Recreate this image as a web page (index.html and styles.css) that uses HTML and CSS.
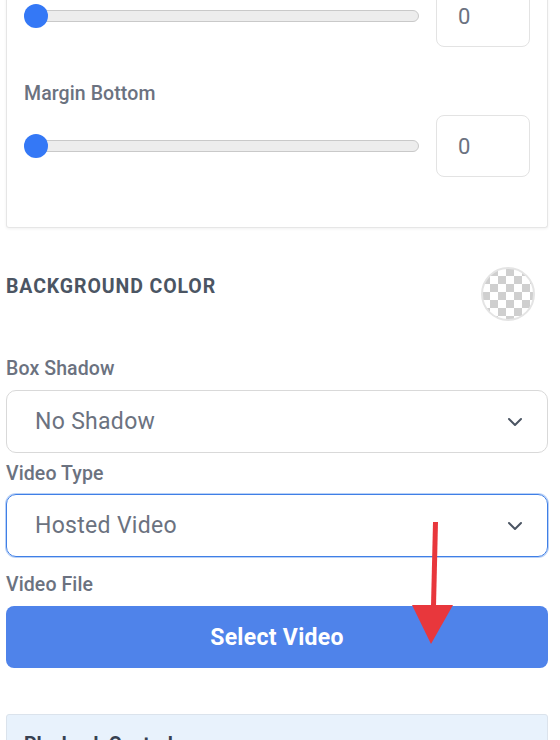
FILE: index.html
```html
<!DOCTYPE html>
<html>
<head>
<meta charset="utf-8">
<link rel="stylesheet" href="styles.css">
</head>
<body>
<div class="page">
  <div class="card">
    <div class="slider-row">
      <div class="slider"><div class="track"></div><div class="thumb"></div></div>
      <div class="num">0</div>
    </div>
    <div class="label mb-label">Margin Bottom</div>
    <div class="slider-row">
      <div class="slider"><div class="track"></div><div class="thumb"></div></div>
      <div class="num">0</div>
    </div>
  </div>

  <div class="bg-row">
    <div class="heading">BACKGROUND COLOR</div>
    <div class="swatch"></div>
  </div>

  <div class="label first">Box Shadow</div>
  <div class="select"><span>No Shadow</span>
    <svg class="chev" width="16" height="10" viewBox="0 0 16 10"><path d="M2 2 L8 8 L14 2" fill="none" stroke="#4b5563" stroke-width="2" stroke-linecap="round" stroke-linejoin="round"/></svg>
  </div>

  <div class="label">Video Type</div>
  <div class="select focused"><span>Hosted Video</span>
    <svg class="chev" width="16" height="10" viewBox="0 0 16 10"><path d="M2 2 L8 8 L14 2" fill="none" stroke="#4b5563" stroke-width="2" stroke-linecap="round" stroke-linejoin="round"/></svg>
  </div>

  <div class="label vf">Video File</div>
  <div class="btn">Select Video</div>

  <div class="panel"><div class="panel-title">Playback Control</div></div>

  <svg class="arrow" width="60" height="130" viewBox="0 0 60 130">
    <path d="M26 0 L31 0 L29 84 L24 84 Z" fill="#e8373c"/>
    <path d="M5 83 L46 83 L24 122 Z" fill="#e8373c"/>
  </svg>
</div>
</body>
</html>
```

FILE: styles.css
```css
* { box-sizing: border-box; }
html, body { margin: 0; padding: 0; background: #fff; }
body {
  font-family: Roboto, "Liberation Sans", Arial, sans-serif;
  color: #6b7280;
  overflow: hidden;
}
.page {
  position: relative;
  width: 542px;
  margin-left: 6px;
  margin-top: -15px;
}
.card {
  border: 1px solid #e6e6e6;
  border-top: none;
  border-radius: 0 0 3px 3px;
  box-shadow: 0 1px 3px rgba(0,0,0,0.06);
  padding: 0 17px 50px 17px;
}
.slider-row {
  display: flex;
  align-items: center;
  gap: 17px;
}
.slider {
  position: relative;
  flex: 1;
  height: 24px;
  display: flex;
  align-items: center;
}
.track {
  width: 100%;
  height: 12px;
  margin-left: 2px;
  background: #ededed;
  border: 1px solid #c9c9c9;
  border-radius: 6px;
}
.thumb {
  position: absolute;
  left: 0;
  top: 0;
  width: 24px;
  height: 24px;
  border-radius: 50%;
  background: #3478f6;
}
.num {
  width: 94px;
  height: 62px;
  border: 1px solid #e3e3e3;
  border-radius: 8px;
  padding-left: 21px;
  display: flex;
  align-items: center;
  font-size: 22px;
  color: #6b7280;
}
.label {
  font-size: 19.5px;
  font-weight: 500;
  line-height: 20px;
  letter-spacing: 0.1px;
  color: #6b7280;
  margin-top: 11px;
  margin-bottom: 10px;
}
.mb-label { margin-top: 37px; margin-bottom: 11px; }
.label.first { margin-top: 38px; margin-bottom: 11px; }
.label.vf { margin-top: 18px; margin-bottom: 11px; }
.bg-row {
  margin-top: 39px;
  height: 54px;
  display: flex;
  justify-content: space-between;
  align-items: flex-start;
}
.heading {
  margin-top: 10px;
  font-size: 19.5px;
  line-height: 20px;
  font-weight: 700;
  letter-spacing: 0.9px;
  color: #4b5563;
}
.swatch {
  width: 54px;
  height: 54px;
  margin-right: 13px;
  border-radius: 50%;
  border: 2px solid #e4e4e4;
  background: repeating-conic-gradient(#cfcfcf 0 25%, #fff 0 50%) -1px -1px / 16px 16px;
}
.select {
  height: 63px;
  border: 1px solid #d9d9d9;
  border-radius: 10px;
  padding: 0 24px 0 28px;
  display: flex;
  align-items: center;
  justify-content: space-between;
  font-size: 23px;
  letter-spacing: 0.3px;
  color: #6b7280;
}
.select.focused {
  border: 1.5px solid #3f7fe6;
  box-shadow: 0 0 0 1px #b9d1f7;
}
.btn {
  height: 62px;
  border-radius: 8px;
  background: #4f83ea;
  color: #fff;
  font-size: 23px;
  font-weight: 700;
  letter-spacing: 0.3px;
  display: flex;
  align-items: center;
  justify-content: center;
}
.panel {
  margin-top: 46px;
  height: 80px;
  background: #e8f2fc;
  border: 1px solid #dbe3ec;
  border-radius: 3px;
  padding: 18px 17px;
}
.panel-title {
  font-size: 19.5px;
  line-height: 24px;
  font-weight: 700;
  color: #374151;
}
.arrow {
  position: absolute;
  left: 401px;
  top: 537px;
}
```
